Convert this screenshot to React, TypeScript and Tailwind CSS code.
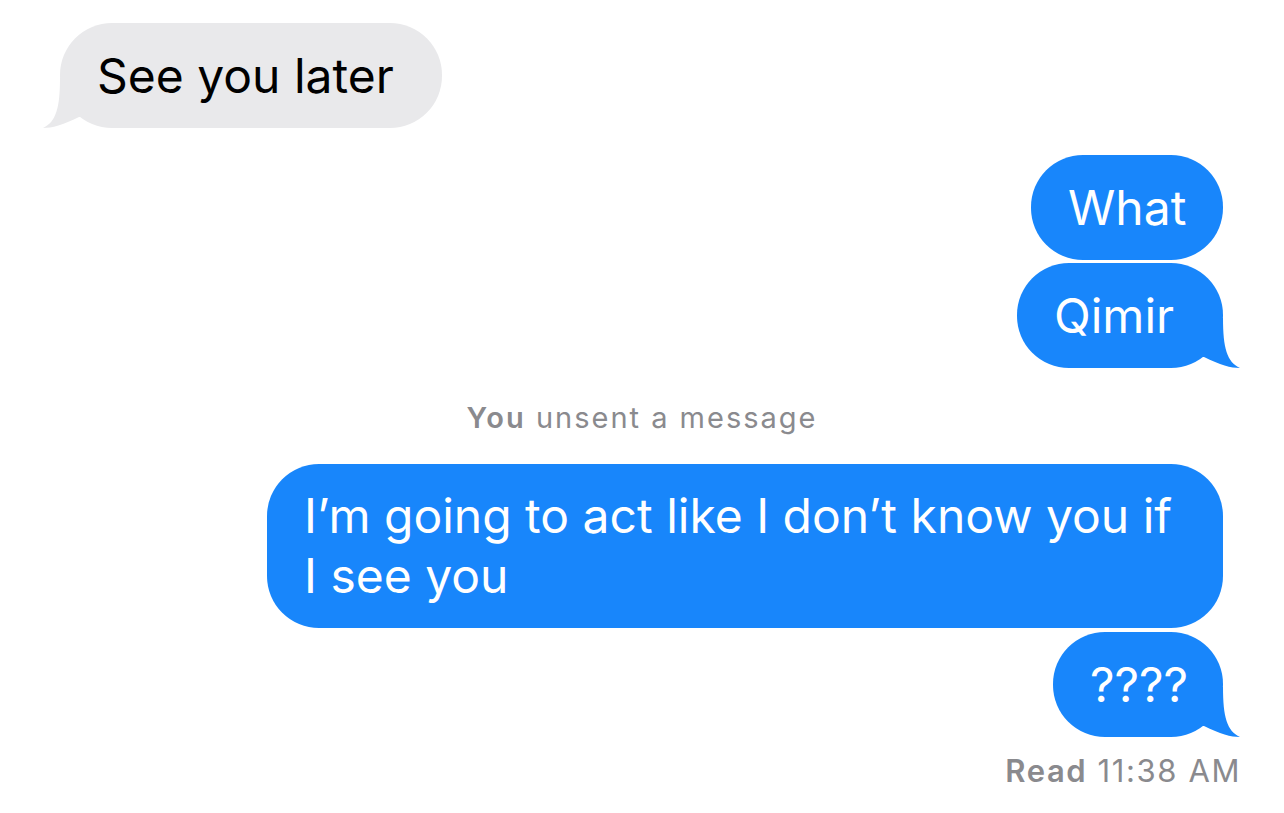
import type { ReactNode } from 'react'

const BLUE = '#1886fb'
const GRAY = '#e9e9eb'

function Tail({ side, color }: { side: 'left' | 'right'; color: string }) {
  return (
    <svg
      width="60"
      height="50"
      viewBox="0 0 60 50"
      className={
        side === 'right'
          ? 'absolute bottom-0 right-[-17px]'
          : 'absolute bottom-0 left-[-17px] -scale-x-100'
      }
    >
      <path
        d="M0 0 L43 0 C43 30 47 44 60 50 C51 50 40 47 24 39 L0 39 Z"
        fill={color}
      />
    </svg>
  )
}

function Bubble({
  children,
  me,
  tail,
  width,
  lead = 'leading-[61px]',
}: {
  children: ReactNode
  me?: boolean
  tail?: boolean
  width: string
  lead?: string
}) {
  return (
    <div
      className={`relative rounded-[52px] py-[22px] pl-[37px] text-[48px] ${lead} ${width} ${
        me ? 'bg-[#1886fb] text-white' : 'bg-[#e9e9eb] text-black'
      }`}
    >
      {tail && <Tail side={me ? 'right' : 'left'} color={me ? BLUE : GRAY} />}
      <span className="relative">{children}</span>
    </div>
  )
}

export default function App() {
  return (
    <div className="w-[1284px] h-[813px] overflow-hidden bg-white font-['Inter',sans-serif]">
      <div className="flex flex-col pt-[23px] pl-[60px] pr-[61px]">
        <div className="flex justify-start">
          <Bubble tail width="w-[382px]">
            See you later
          </Bubble>
        </div>

        <div className="mt-[27px] flex justify-end">
          <Bubble me width="w-[192px]">
            What
          </Bubble>
        </div>
        <div className="mt-[3px] flex justify-end">
          <Bubble me tail width="w-[206px]">
            Qimir
          </Bubble>
        </div>

        <div className="mt-[33px] ml-[-60px] mr-[-61px] text-center text-[29px] leading-[34px] tracking-[2px] text-[#8a8a8e]">
          <span className="font-semibold">You</span> unsent a message
        </div>

        <div className="mt-[29px] flex justify-end">
          <Bubble me width="w-[956px]" lead="leading-[60px]">
            I’m going to act like I don’t know you if
            <br />I see you
          </Bubble>
        </div>
        <div className="mt-[4px] flex justify-end">
          <Bubble me tail width="w-[170px]">
            ????
          </Bubble>
        </div>

        <div className="mt-[16px] mr-[-18px] text-right text-[31px] leading-[36px] tracking-[1.6px] text-[#8a8a8e]">
          <span className="font-semibold">Read</span> 11:38 AM
        </div>
      </div>
    </div>
  )
}
